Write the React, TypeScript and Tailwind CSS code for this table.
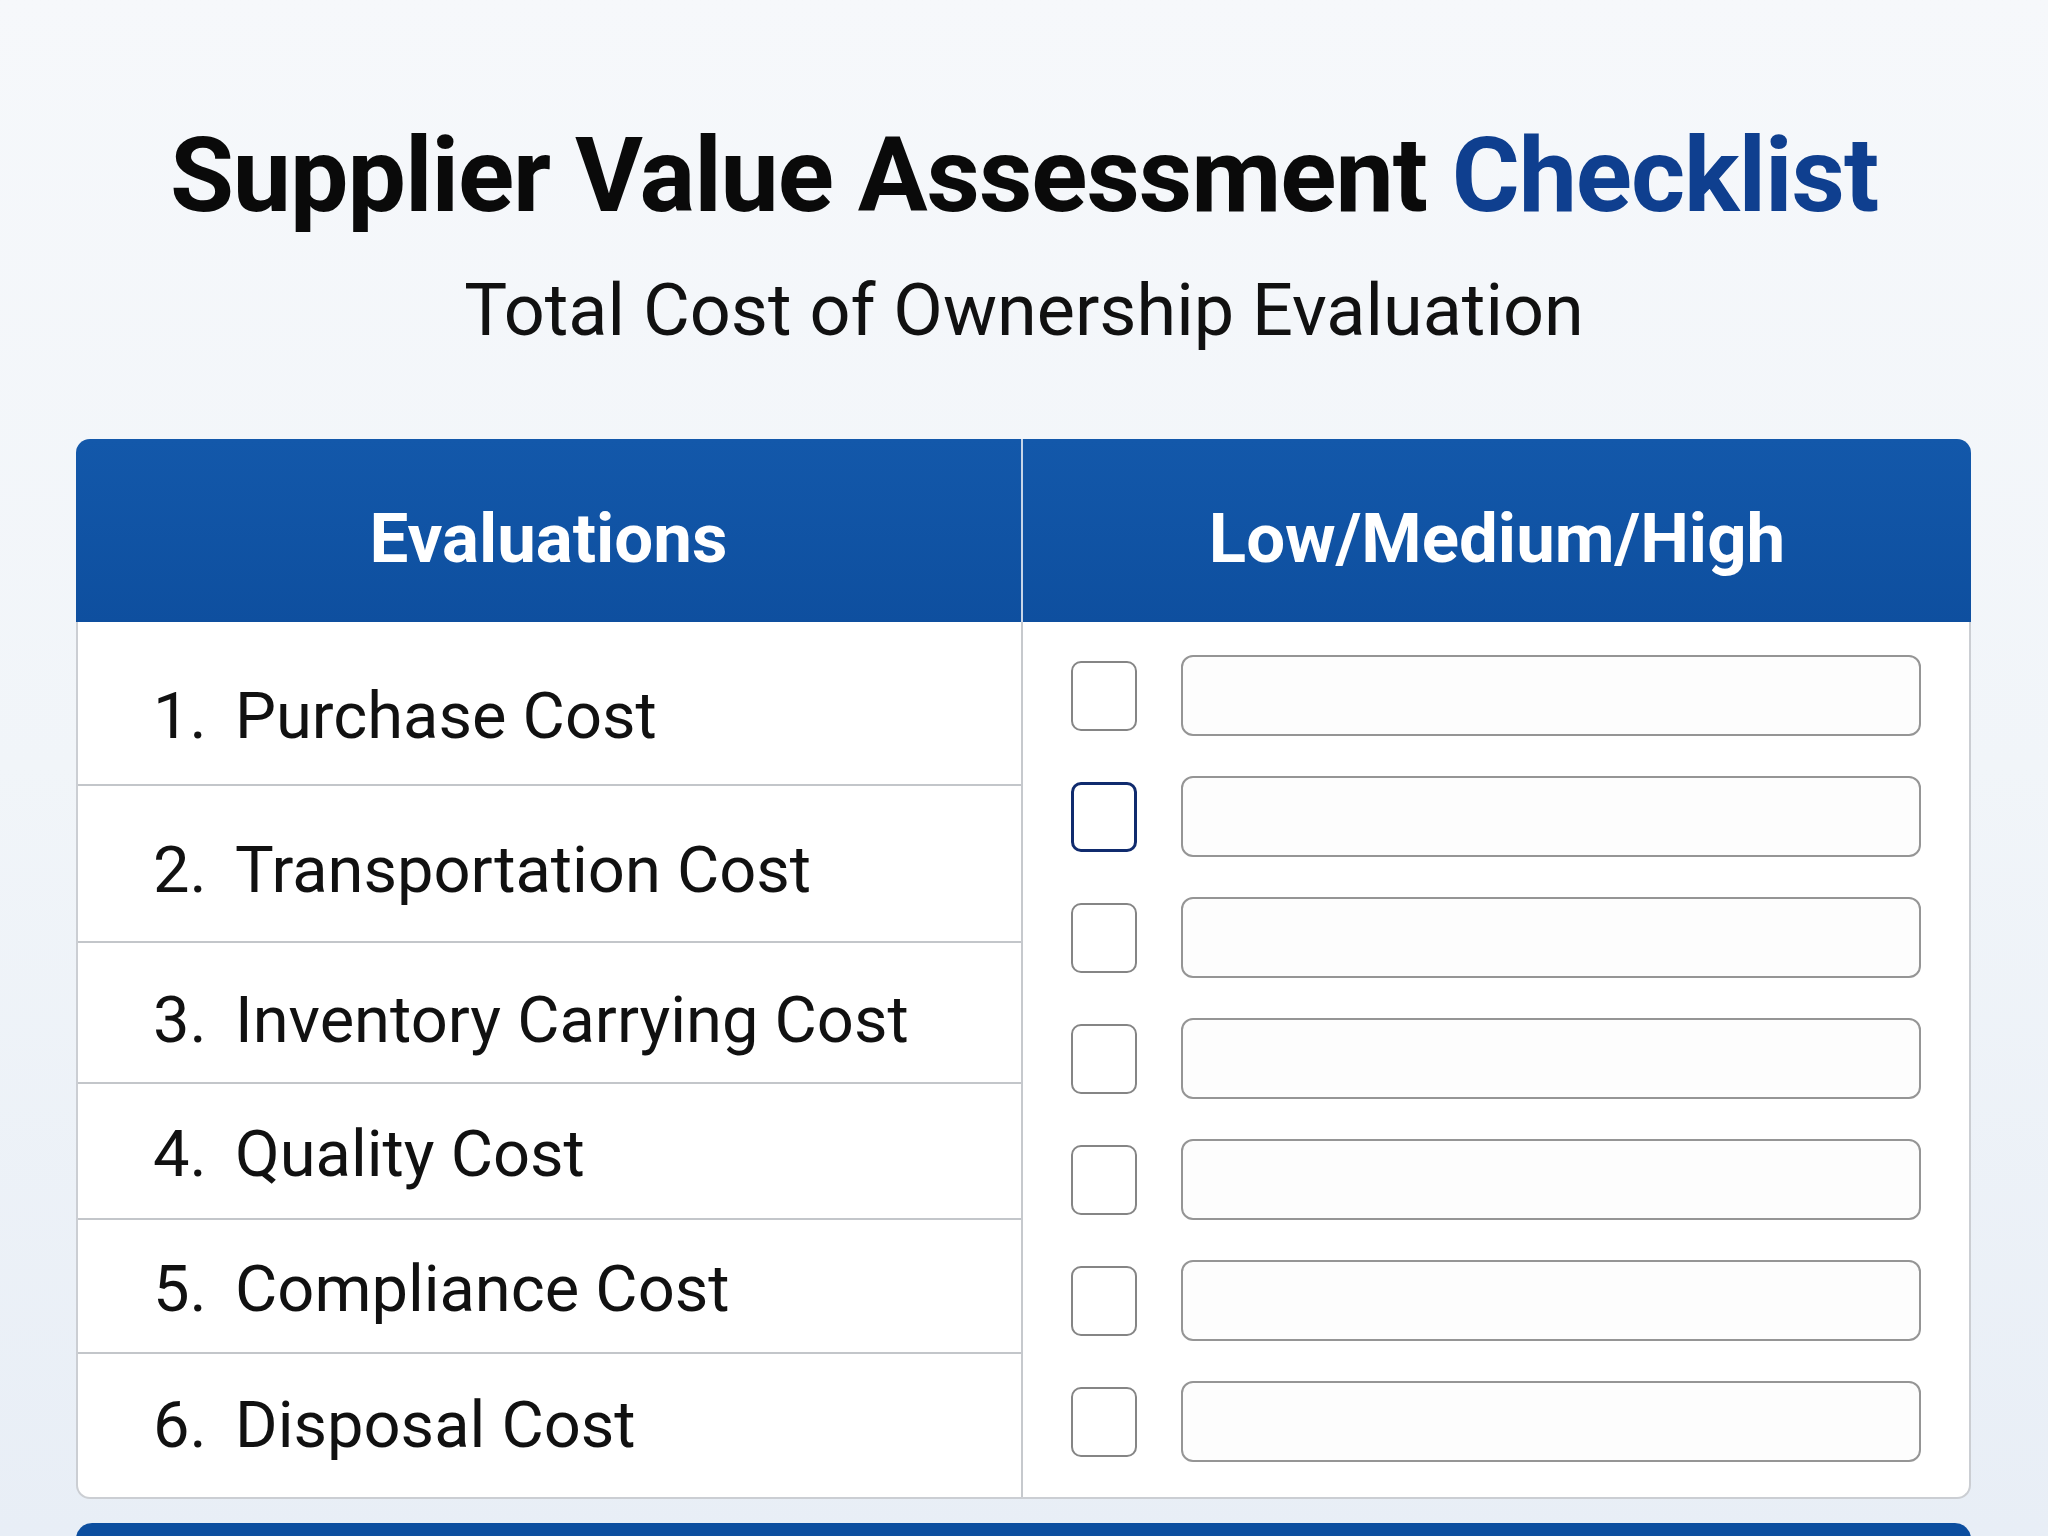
import React from "react";

const rows = [
  { num: "1.", label: "Purchase Cost", cls: "h-[164px] pt-[26px] border-b-2" },
  { num: "2.", label: "Transportation Cost", cls: "h-[157px] pt-[14px] border-b-2" },
  { num: "3.", label: "Inventory Carrying Cost", cls: "h-[141px] pt-[16px] border-b-2" },
  { num: "4.", label: "Quality Cost", cls: "h-[136px] pt-[6px] border-b-2" },
  { num: "5.", label: "Compliance Cost", cls: "h-[134px] pt-[6px] border-b-2" },
  { num: "6.", label: "Disposal Cost", cls: "flex-1" },
];

const ratings = [false, true, false, false, false, false, false];

const App = () => {
  return (
    <div className="h-[1536px] w-full overflow-hidden bg-gradient-to-b from-[#f6f8fb] via-[#f1f5f9] to-[#e8eef6] font-['Roboto',sans-serif] flex flex-col items-center">
      <h1 className="mt-[124px] text-[104px] leading-none font-bold tracking-[-0.01em] text-[#0a0a0a]">
        Supplier Value Assessment <span className="text-[#0f3f8f]">Checklist</span>
      </h1>
      <p className="mt-[47px] text-[72px] leading-none text-[#111]">
        Total Cost of Ownership Evaluation
      </p>

      <div className="mt-[92px] w-[1895px] self-start ml-[76px]">
        {/* header */}
        <div className="flex h-[183px] rounded-t-[14px] bg-gradient-to-b from-[#1358aa] to-[#0e4f9f] text-white text-[69px] font-bold leading-none">
          <div className="w-[947px] border-r-2 border-[#c7d5e8] flex items-center justify-center pt-[16px]">
            Evaluations
          </div>
          <div className="flex-1 flex items-center justify-center pt-[16px]">
            Low/Medium/High
          </div>
        </div>

        {/* body */}
        <div className="flex h-[877px] bg-white border-x-2 border-b-2 border-[#cbced3] rounded-b-[14px]">
          <div className="w-[945px] border-r-2 border-[#c6c9cd] flex flex-col">
            {rows.map((r) => (
              <div
                key={r.num}
                className={`${r.cls} border-[#c3c6ca] flex items-center pl-[75px] text-[65px] leading-none text-[#111]`}
              >
                <span className="w-[82px]">{r.num}</span>
                <span>{r.label}</span>
              </div>
            ))}
          </div>
          <div className="flex-1 flex flex-col gap-[40px] pt-[33px] pl-[48px] pr-[48px]">
            {ratings.map((active, i) => (
              <div key={i} className="flex items-center gap-[44px]">
                <div
                  className={
                    active
                      ? "w-[66px] h-[70px] rounded-[10px] border-[3px] border-[#102b6e] bg-white"
                      : "w-[66px] h-[70px] rounded-[10px] border-2 border-[#858585] bg-white"
                  }
                />
                <div className="flex-1 h-[81px] rounded-[12px] border-2 border-[#959595] bg-[#fdfdfd]" />
              </div>
            ))}
          </div>
        </div>

        <div className="mt-[24px] h-[60px] rounded-t-[16px] bg-[#0c4e9f]" />
      </div>
    </div>
  );
};

export default App;
